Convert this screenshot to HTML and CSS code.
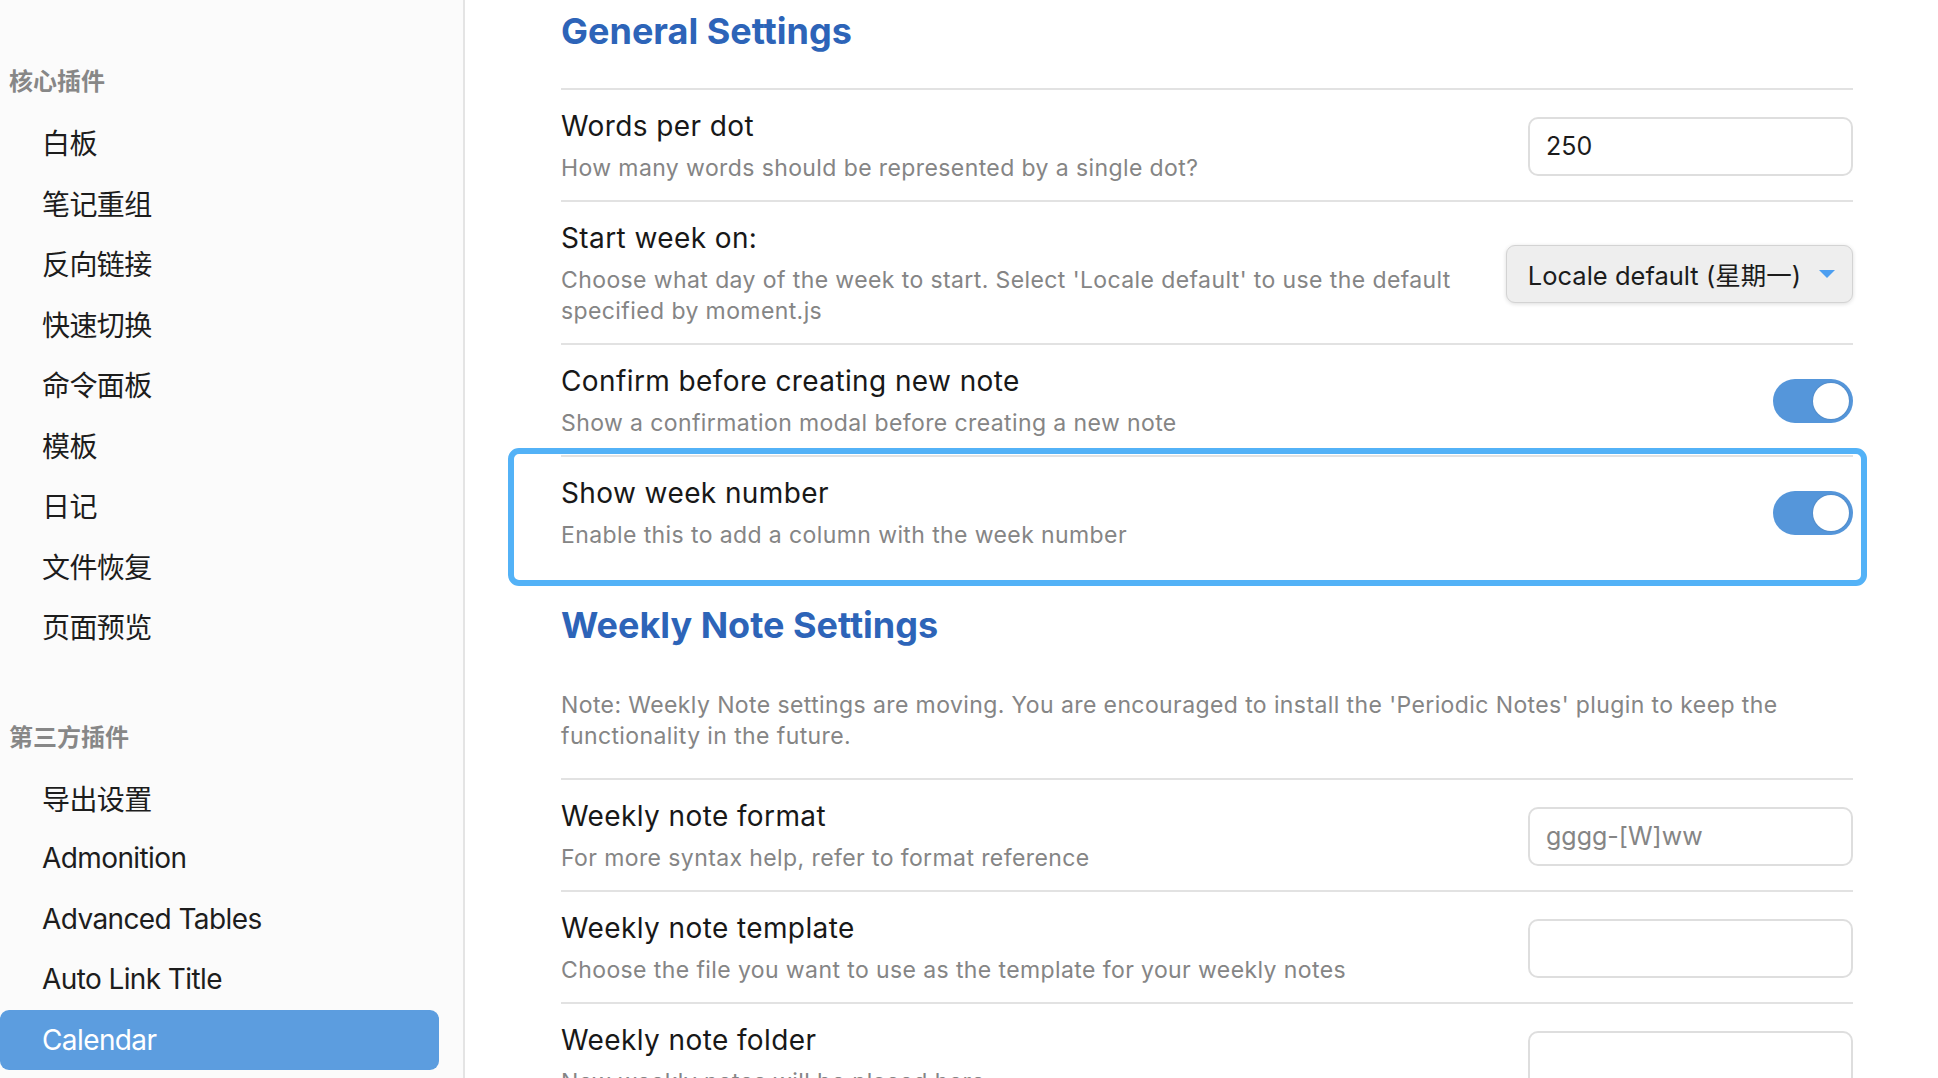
FILE: index.html
```html
<!DOCTYPE html>
<html lang="zh-CN">
<head>
<meta charset="utf-8">
<title>Calendar Settings</title>
<link rel="stylesheet" href="styles.css">
</head>
<body>
<div class="app">
  <aside class="sidebar">
    <div class="group">
      <div class="group-title">核心插件</div>
      <div class="nav-item">白板</div>
      <div class="nav-item">笔记重组</div>
      <div class="nav-item">反向链接</div>
      <div class="nav-item">快速切换</div>
      <div class="nav-item">命令面板</div>
      <div class="nav-item">模板</div>
      <div class="nav-item">日记</div>
      <div class="nav-item">文件恢复</div>
      <div class="nav-item">页面预览</div>
    </div>
    <div class="group group-second">
      <div class="group-title">第三方插件</div>
      <div class="nav-item">导出设置</div>
      <div class="nav-item">Admonition</div>
      <div class="nav-item">Advanced Tables</div>
      <div class="nav-item">Auto Link Title</div>
      <div class="nav-item is-active">Calendar</div>
    </div>
  </aside>
  <main class="content">
    <div class="panel">
      <h2 class="section-heading">General Settings</h2>

      <div class="setting">
        <div class="info">
          <div class="name">Words per dot</div>
          <div class="desc">How many words should be represented by a single dot?</div>
        </div>
        <div class="control"><input class="text-input" type="text" value="250"></div>
      </div>

      <div class="setting">
        <div class="info">
          <div class="name">Start week on:</div>
          <div class="desc">Choose what day of the week to start. Select 'Locale default' to use the default specified by moment.js</div>
        </div>
        <div class="control">
          <div class="dropdown"><span>Locale default (星期一)</span><span class="caret"></span></div>
        </div>
      </div>

      <div class="setting">
        <div class="info">
          <div class="name">Confirm before creating new note</div>
          <div class="desc">Show a confirmation modal before creating a new note</div>
        </div>
        <div class="control"><div class="toggle is-on"><span class="knob"></span></div></div>
      </div>

      <div class="setting is-focused">
        <div class="info">
          <div class="name">Show week number</div>
          <div class="desc">Enable this to add a column with the week number</div>
        </div>
        <div class="control"><div class="toggle is-on"><span class="knob"></span></div></div>
        <div class="focus-ring"></div>
      </div>

      <h2 class="section-heading second">Weekly Note Settings</h2>
      <p class="note">Note: Weekly Note settings are moving. You are encouraged to install the 'Periodic Notes' plugin to keep the functionality in the future.</p>

      <div class="setting">
        <div class="info">
          <div class="name">Weekly note format</div>
          <div class="desc">For more syntax help, refer to format reference</div>
        </div>
        <div class="control"><input class="text-input" type="text" placeholder="gggg-[W]ww"></div>
      </div>

      <div class="setting">
        <div class="info">
          <div class="name">Weekly note template</div>
          <div class="desc">Choose the file you want to use as the template for your weekly notes</div>
        </div>
        <div class="control"><input class="text-input" type="text"></div>
      </div>

      <div class="setting">
        <div class="info">
          <div class="name">Weekly note folder</div>
          <div class="desc">New weekly notes will be placed here</div>
        </div>
        <div class="control"><input class="text-input" type="text"></div>
      </div>
    </div>
  </main>
</div>
</body>
</html>
```

FILE: styles.css
```css
* { box-sizing: border-box; }

html, body {
  margin: 0;
  padding: 0;
  height: 100%;
  overflow: hidden;
  background: #ffffff;
}

body {
  font-family: "Inter", "Noto Sans CJK SC", sans-serif;
  color: #1c1c1c;
}

.app {
  display: flex;
  height: 1078px;
  overflow: hidden;
}

/* Sidebar */
.sidebar {
  width: 465px;
  flex: none;
  background: #fbfbfb;
  border-right: 2px solid #e4e4e4;
  padding-top: 65px;
}

.group-title {
  font-family: "Noto Sans CJK SC", sans-serif;
  font-size: 24px;
  font-weight: 700;
  line-height: 30px;
  color: #878787;
  padding-left: 9px;
  margin-bottom: 17px;
}

.group-second {
  margin-top: 64px;
}

.nav-item {
  height: 60.5px;
  display: flex;
  align-items: center;
  padding-left: 42px;
  margin-right: 24px;
  font-size: 28px;
  color: #1d1d1d;
  border-radius: 9px;
  letter-spacing: -0.6px;
}

.nav-item.is-active {
  background: #5c9ddf;
  color: #ffffff;
}

/* Main content */
.content {
  flex: 1;
  padding: 9px 85px 0 96px;
  overflow: hidden;
}

.panel {
  display: flex;
  flex-direction: column;
}

.section-heading {
  margin: 0 0 35px;
  font-size: 36px;
  line-height: 44px;
  font-weight: 700;
  color: #2d64b8;
  letter-spacing: 0;
}

.section-heading.second {
  margin-top: 36px;
  margin-bottom: 0;
}

.note {
  margin: 43px 0 26px;
  font-size: 23px;
  line-height: 31px;
  color: #858585;
  letter-spacing: 0.4px;
}

.setting {
  position: relative;
  display: flex;
  align-items: center;
  gap: 40px;
  border-top: 2px solid #e2e2e2;
  padding: 18px 0 16px;
}

.info {
  flex: 1;
  min-width: 0;
  display: flex;
  flex-direction: column;
  gap: 9px;
}

.name {
  font-size: 28px;
  line-height: 36px;
  color: #181818;
  letter-spacing: 0.4px;
}

.desc {
  font-size: 23px;
  line-height: 31px;
  color: #858585;
  letter-spacing: 0.4px;
}

.control {
  flex: none;
  display: flex;
  align-items: center;
}

.text-input {
  width: 325px;
  height: 59px;
  border: 2px solid #dedede;
  border-radius: 10px;
  padding: 0 16px;
  font-family: "Inter", sans-serif;
  font-size: 25px;
  color: #1c1c1c;
  background: #ffffff;
  outline: none;
}

.text-input::placeholder {
  color: #858585;
}

.dropdown {
  display: flex;
  align-items: center;
  gap: 18px;
  height: 58px;
  padding: 0 17px 0 21px;
  background: #eeeeee;
  border: 1.5px solid #d3d3d3;
  border-radius: 9px;
  box-shadow: 0 1px 4px rgba(0, 0, 0, 0.14);
  font-size: 25.5px;
  color: #1c1c1c;
}

.caret {
  width: 0;
  height: 0;
  border-left: 8px solid transparent;
  border-right: 8px solid transparent;
  border-top: 8px solid #4c9ef0;
}

.toggle {
  width: 80px;
  height: 44px;
  border-radius: 22px;
  background: #5596da;
  display: flex;
  align-items: center;
  justify-content: flex-end;
  padding: 4px;
}

.knob {
  width: 36px;
  height: 36px;
  border-radius: 50%;
  background: #ffffff;
  box-shadow: 0 0 2px rgba(0, 0, 0, 0.2);
}

.focus-ring {
  position: absolute;
  top: -9px;
  bottom: -19px;
  left: -53px;
  right: -14px;
  border: 6px solid #53b2f7;
  border-radius: 11px;
  pointer-events: none;
}
```
